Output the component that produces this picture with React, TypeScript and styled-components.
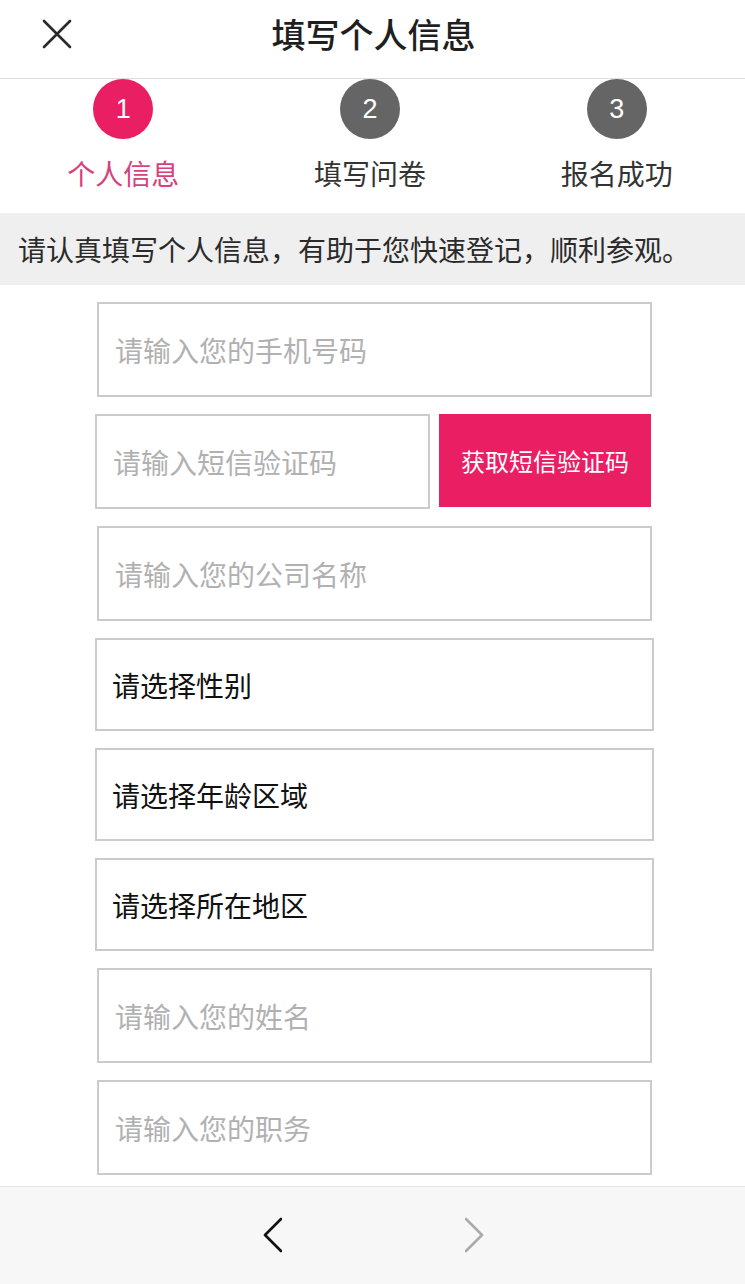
import React from "react";
import styled, { createGlobalStyle } from "styled-components";

const GlobalStyle = createGlobalStyle`
  html, body {
    margin: 0;
    padding: 0;
    background: #ffffff;
  }
  body {
    width: 745px;
    font-family: "Noto Sans CJK SC", "Noto Sans", sans-serif;
    color: #222;
  }
  * { box-sizing: border-box; }
`;

const Page = styled.div`
  width: 745px;
  min-height: 1284px;
  display: flex;
  flex-direction: column;
  background: #fff;
`;

const Header = styled.header`
  height: 79px;
  display: grid;
  grid-template-columns: 1fr auto 1fr;
  align-items: center;
  border-bottom: 1px solid #dedede;
  padding-bottom: 10px;
`;

const CloseButton = styled.button`
  justify-self: start;
  margin-left: 40px;
  width: 34px;
  height: 34px;
  padding: 0;
  border: none;
  background: transparent;
  display: flex;
  align-items: center;
  justify-content: center;
`;

const Title = styled.h1`
  margin: 0 0 0 2px;
  font-size: 34px;
  font-weight: 500;
  line-height: 1;
  color: #1f1f1f;
  letter-spacing: 0;
`;

const Steps = styled.div`
  display: grid;
  grid-template-columns: repeat(3, 1fr);
  padding: 0 5px 26px 0;
`;

const Step = styled.div`
  display: flex;
  flex-direction: column;
  align-items: center;
`;

const Circle = styled.div<{ $active?: boolean }>`
  width: 60px;
  height: 60px;
  border-radius: 50%;
  background: ${(p) => (p.$active ? "#e91e63" : "#656565")};
  color: #fff;
  display: flex;
  align-items: center;
  justify-content: center;
  font-family: "Liberation Sans", "Roboto", sans-serif;
  font-size: 27px;
  line-height: 1;
`;

const StepLabel = styled.div<{ $active?: boolean }>`
  margin-top: 20px;
  font-size: 28px;
  line-height: 28px;
  color: ${(p) => (p.$active ? "#d5427c" : "#333")};
`;

const Notice = styled.div`
  height: 72px;
  background: #efefef;
  display: flex;
  align-items: center;
  padding-left: 18px;
  font-size: 28px;
  color: #2b2b2b;
  white-space: nowrap;
`;

const Form = styled.div`
  display: flex;
  flex-direction: column;
  align-items: center;
  gap: 17px;
  padding: 17px 0 0 4px;
`;

const TextInput = styled.input<{ $width: number }>`
  width: ${(p) => p.$width}px;
  height: 95px;
  border: 2px solid #cbcbcb;
  border-radius: 0;
  outline: none;
  padding: 0 0 0 16px;
  font-family: "Noto Sans CJK SC", "Noto Sans", sans-serif;
  font-size: 28px;
  color: #222;
  background: #fff;
  &::placeholder {
    color: #b1b1b1;
  }
`;

const SmsRow = styled.div`
  width: 556px;
  display: flex;
  align-items: flex-start;
  gap: 9px;
  margin-left: -3px;
`;

const SmsButton = styled.button`
  width: 212px;
  height: 93px;
  border: none;
  border-radius: 0;
  background: #e91e63;
  color: #fff;
  font-family: "Noto Sans CJK SC", "Noto Sans", sans-serif;
  font-size: 24px;
  padding: 0;
`;

const SelectField = styled.div`
  width: 559px;
  height: 93px;
  border: 2px solid #cbcbcb;
  display: flex;
  align-items: center;
  padding-left: 15px;
  font-size: 28px;
  color: #111;
`;

const Footer = styled.footer`
  margin-top: 11px;
  height: 98px;
  border-top: 1px solid #e6e6e6;
  background: #f7f7f7;
  display: flex;
  align-items: center;
  justify-content: center;
  gap: 183px;
  padding-left: 1px;
  padding-bottom: 2px;
`;

const NavButton = styled.button`
  width: 19px;
  height: 36px;
  padding: 0;
  border: none;
  background: transparent;
  display: flex;
`;

const CloseIcon = () => (
  <svg width="32" height="32" viewBox="0 0 32 32">
    <path d="M3 3 L29 29 M29 3 L3 29" stroke="#2a2a2a" strokeWidth="2.6" strokeLinecap="round" fill="none" />
  </svg>
);

const Chevron = ({ dir, color }: { dir: "left" | "right"; color: string }) => (
  <svg width="19" height="36" viewBox="0 0 19 36">
    <polyline
      points={dir === "left" ? "18,2 2,18 18,34" : "1,2 17,18 1,34"}
      stroke={color}
      strokeWidth="2.6"
      fill="none"
      strokeLinecap="round"
      strokeLinejoin="round"
    />
  </svg>
);

const steps = [
  { n: "1", label: "个人信息", active: true },
  { n: "2", label: "填写问卷", active: false },
  { n: "3", label: "报名成功", active: false },
];

export default function App() {
  return (
    <Page>
      <GlobalStyle />
      <Header>
        <CloseButton aria-label="关闭">
          <CloseIcon />
        </CloseButton>
        <Title>填写个人信息</Title>
        <div />
      </Header>
      <Steps>
        {steps.map((s) => (
          <Step key={s.n}>
            <Circle $active={s.active}>{s.n}</Circle>
            <StepLabel $active={s.active}>{s.label}</StepLabel>
          </Step>
        ))}
      </Steps>
      <Notice>请认真填写个人信息，有助于您快速登记，顺利参观。</Notice>
      <Form>
        <TextInput $width={555} placeholder="请输入您的手机号码" />
        <SmsRow>
          <TextInput $width={335} placeholder="请输入短信验证码" />
          <SmsButton>获取短信验证码</SmsButton>
        </SmsRow>
        <TextInput $width={555} placeholder="请输入您的公司名称" />
        <SelectField>请选择性别</SelectField>
        <SelectField>请选择年龄区域</SelectField>
        <SelectField>请选择所在地区</SelectField>
        <TextInput $width={555} placeholder="请输入您的姓名" />
        <TextInput $width={555} placeholder="请输入您的职务" />
      </Form>
      <Footer>
        <NavButton aria-label="上一步">
          <Chevron dir="left" color="#111" />
        </NavButton>
        <NavButton aria-label="下一步">
          <Chevron dir="right" color="#ababab" />
        </NavButton>
      </Footer>
    </Page>
  );
}
